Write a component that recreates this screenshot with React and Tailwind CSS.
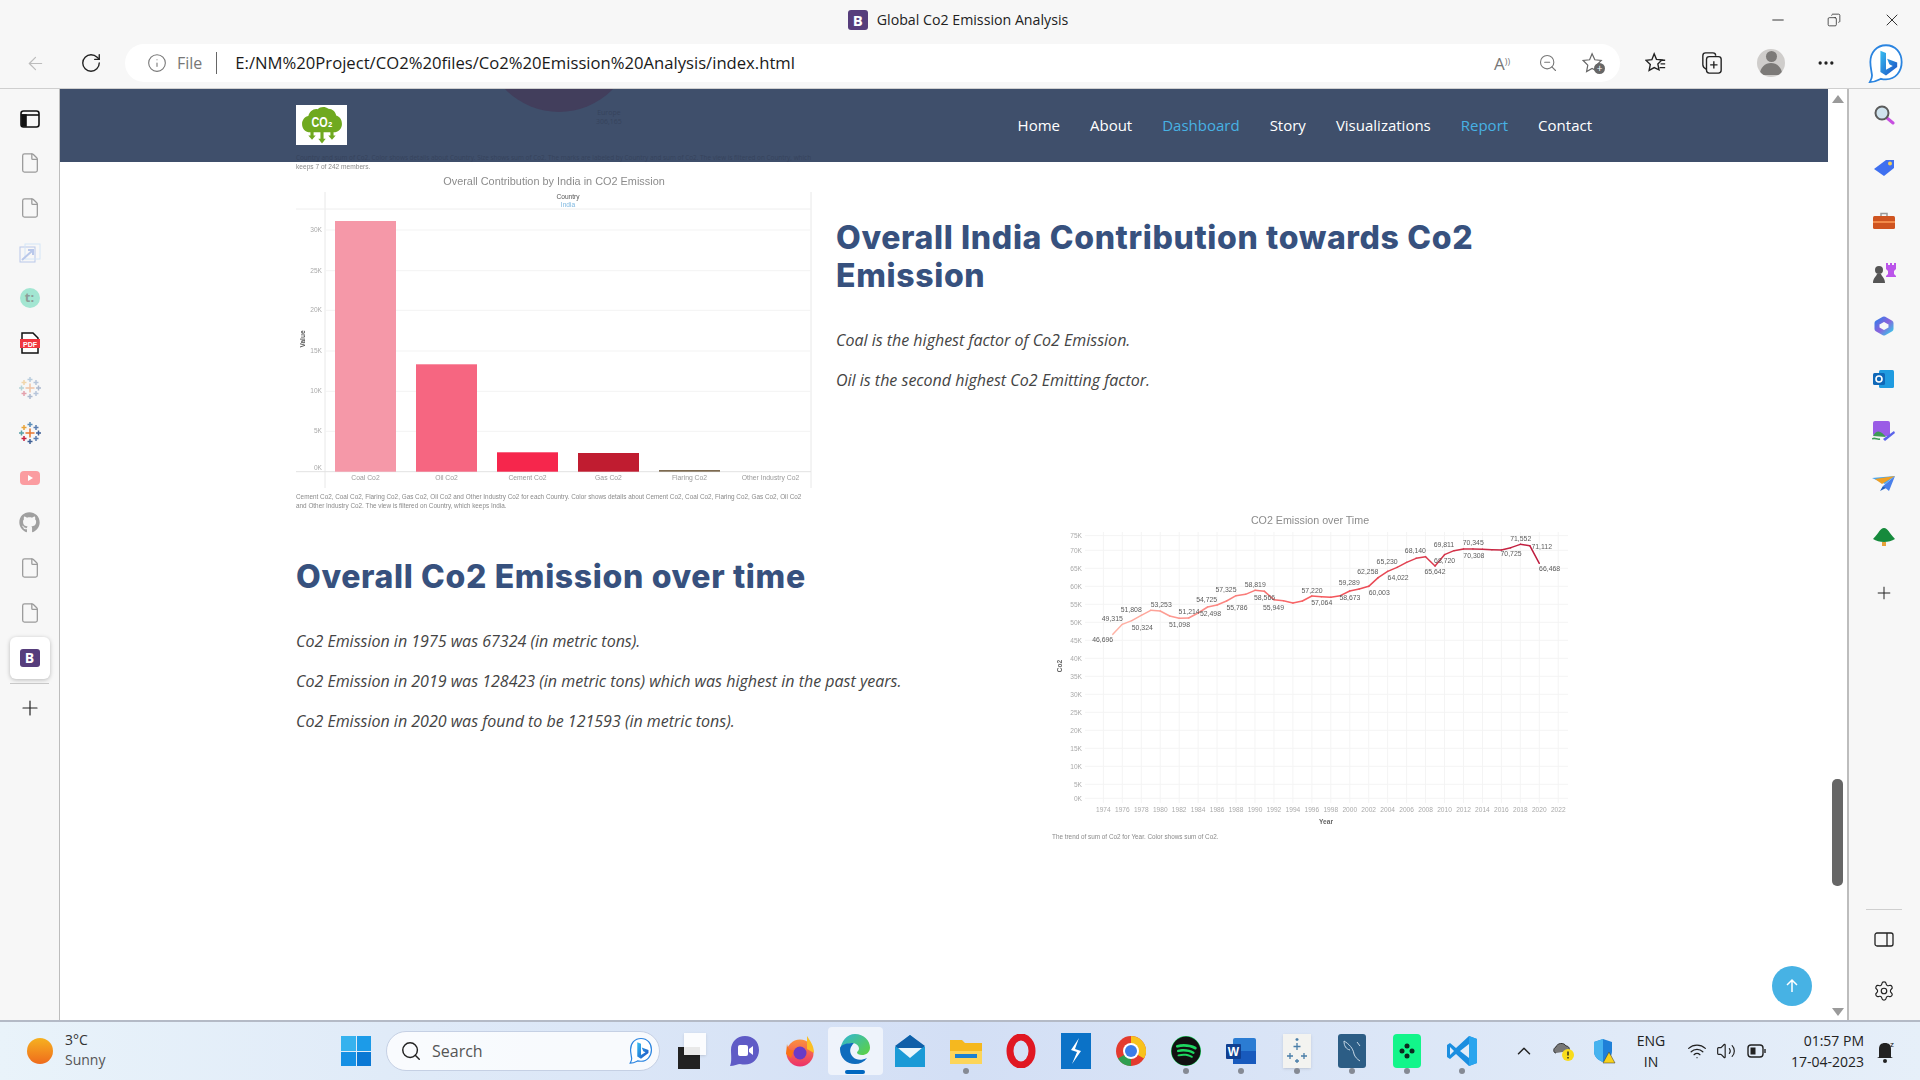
import React from "react";
import { ArrowLeft, RotateCw, Info, ZoomOut, Plus, Minus, X, Settings, File, Search, ChevronUp, Wifi, Volume2, Copy, MoreHorizontal } from "lucide-react";
import { FaGithub, FaSpotify } from "react-icons/fa";

const navLinks = [
  { label: "Home" },
  { label: "About" },
  { label: "Dashboard", active: true },
  { label: "Story" },
  { label: "Visualizations" },
  { label: "Report", active: true },
  { label: "Contact" },
];

const years = [
  388, 358, 347, 331, 316, 318, 333, 340, 339, 324, 306, 300, 288, 272, 268, 256, 259, 284, 287, 294, 288, 273, 275,
  277, 272, 258, 252, 244, 218, 199, 187, 172, 160, 155, 183, 149, 137, 132, 132, 133, 134, 135, 128, 118, 122, 175,
];

const pointLabels = [
  ["46,696", 182, 405], ["49,315", 210, 342], ["51,808", 265, 314], ["50,324", 297, 367], ["53,253", 352, 299],
  ["51,098", 405, 358], ["51,214", 433, 320], ["52,498", 495, 325], ["54,725", 484, 283], ["57,325", 540, 255],
  ["55,786", 572, 307], ["58,819", 625, 239], ["58,566", 652, 278], ["55,949", 678, 307], ["57,220", 790, 257],
  ["57,064", 818, 293], ["59,289", 898, 234], ["58,673", 900, 277], ["62,258", 952, 201], ["60,003", 985, 262],
  ["65,230", 1008, 170], ["64,022", 1040, 218], ["68,140", 1090, 138], ["65,642", 1147, 200], ["69,811", 1173, 119],
  ["68,720", 1175, 168], ["70,345", 1258, 114], ["70,308", 1260, 151], ["70,725", 1368, 146], ["71,552", 1396, 101],
  ["71,112", 1457, 124], ["66,468", 1480, 191],
];

const yTicks = [
  ["75K", 92], ["70K", 136], ["65K", 190], ["60K", 244], ["55K", 298], ["50K", 352], ["45K", 406], ["40K", 460],
  ["35K", 514], ["30K", 568], ["25K", 622], ["20K", 676], ["15K", 730], ["10K", 784], ["5K", 838], ["0K", 880],
];

const mix = (a, b, t) => a.map((v, i) => Math.round(v + (b[i] - v) * t));

function lineColor(t) {
  const c = t < 0.5 ? mix([255, 178, 165], [246, 88, 92], t * 2) : mix([246, 88, 92], [190, 28, 62], (t - 0.5) * 2);
  return `rgb(${c.join(",")})`;
}

function BarChart() {
  const bars = [
    ["Coal Co2", 335, 221, "#f598a8"],
    ["Oil Co2", 416, 364.3, "#f66681"],
    ["Cement Co2", 497, 452.3, "#f6264c"],
    ["Gas Co2", 578, 453, "#c01c30"],
    ["Flaring Co2", 659, 470, "#7d6a50"],
    ["Other Industry Co2", 740, 471.7, "#e8e8e8"],
  ];
  const ticks = [["30K", 230], ["25K", 270.7], ["20K", 310.3], ["15K", 351], ["10K", 391.3], ["5K", 431.3], ["0K", 471.7]];
  return (
    <svg viewBox="296 162 520 360" className="w-[520px] h-[360px] blur-[0.4px]" fontFamily="'Liberation Sans', sans-serif">
      <text x="296" y="169" fontSize="6.6" fill="#8a8a8a">keeps 7 of 242 members.</text>
      <text x="554" y="184.5" fontSize="10.9" fill="#8c8c8c" textAnchor="middle">Overall Contribution by India in CO2 Emission</text>
      <text x="568" y="198.5" fontSize="6.6" fill="#555" textAnchor="middle">Country</text>
      <text x="568" y="207" fontSize="6.6" fill="#7db7e0" textAnchor="middle">India</text>
      <line x1="325" y1="192" x2="325" y2="488" stroke="#e8e8e8" />
      <line x1="811" y1="192" x2="811" y2="488" stroke="#e8e8e8" />
      <line x1="296" y1="209" x2="811" y2="209" stroke="#eeeeee" />
      {ticks.map(([t, y]) => (
        <g key={t}>
          <line x1={t === "0K" ? 296 : 325} y1={y} x2="811" y2={y} stroke={t === "0K" ? "#e2e2e2" : "#f3f3f3"} />
          <text x="322" y={t === "0K" ? 470 : y + 2} fontSize="6.6" fill="#aaa" textAnchor="end">{t}</text>
        </g>
      ))}
      <text transform="translate(305 339) rotate(-90)" fontSize="6.6" fontWeight="700" fill="#555" textAnchor="middle">Value</text>
      {bars.map(([name, x, y, color]) => (
        <g key={name}>
          <rect x={x} y={y} width="61" height={471.7 - y} fill={color} />
          <text x={x + 30.5} y="480" fontSize="6.8" fill="#9a9a9a" textAnchor="middle">{name}</text>
        </g>
      ))}
      <text x="296" y="499" fontSize="6.36" fill="#8a8a8a">Cement Co2, Coal Co2, Flaring Co2, Gas Co2, Oil Co2 and Other Industry Co2 for each Country.  Color shows details about Cement Co2, Coal Co2, Flaring Co2, Gas Co2, Oil Co2</text>
      <text x="296" y="507.5" fontSize="6.36" fill="#8a8a8a">and Other Industry Co2. The view is filtered on Country, which keeps India.</text>
    </svg>
  );
}

function LineChart() {
  const px = (x) => 1040 + x / 2.904;
  const py = (y) => 505 + y / 3;
  const yearX = (i) => px(184 + 27.52 * i);
  const tickYears = [];
  for (let y = 1974; y <= 2022; y += 2) tickYears.push(y);
  return (
    <svg viewBox="1040 512 540 350" className="w-[540px] h-[350px] blur-[0.4px]" fontFamily="'Liberation Sans', sans-serif">
      <text x="1310" y="524" fontSize="10.7" fill="#8c8c8c" textAnchor="middle">CO2 Emission over Time</text>
      {yTicks.map(([t, y]) => (
        <g key={t}>
          <line x1="1085" y1={py(y)} x2="1568" y2={py(y)} stroke="#f4f4f4" />
          <text x="1082" y={py(y) + 2.2} fontSize="6.6" fill="#aaa" textAnchor="end">{t}</text>
        </g>
      ))}
      {tickYears.map((y, i) => (
        <g key={y}>
          <line x1={yearX(i * 2)} y1="532" x2={yearX(i * 2)} y2="803" stroke="#f4f4f4" />
          <text x={yearX(i * 2)} y="812" fontSize="6.6" fill="#aaa" textAnchor="middle">{y}</text>
        </g>
      ))}
      {years.slice(1).map((y, i) => (
        <line
          key={i}
          x1={yearX(i + 1)}
          y1={py(years[i])}
          x2={yearX(i + 2)}
          y2={py(y)}
          stroke={lineColor(i / 44)}
          strokeWidth="1.5"
          strokeLinecap="round"
        />
      ))}
      {pointLabels.map(([t, x, y]) => (
        <text key={t} x={px(x)} y={py(y) + 2.4} fontSize="6.9" fill="#5c5c5c" textAnchor="middle">{t}</text>
      ))}
      <text transform="translate(1062 666) rotate(-90)" fontSize="6.6" fontWeight="700" fill="#666" textAnchor="middle">Co2</text>
      <text x="1326" y="824" fontSize="6.6" fontWeight="700" fill="#666" textAnchor="middle">Year</text>
      <text x="1052" y="839" fontSize="6.36" fill="#8a8a8a">The trend of sum of Co2 for Year.  Color shows sum of Co2.</text>
    </svg>
  );
}

function Logo() {
  return (
    <div className="w-[51px] h-[40px] bg-white flex items-center justify-center">
      <svg viewBox="0 0 40 36" className="w-[42px] h-[38px]">
        <path d="M9 25c-5 0-8-3.5-8-8 0-4 3-7 6-7.5C8 5 12 2 16 3c2-2.5 7-3 10-.5 4 0 7 3 7.5 6.5 3.5 1 5.5 4 5.5 8 0 4.5-3.5 8-8 8z" fill="#6fa91f" />
        <rect x="9" y="24" width="3" height="5" fill="#6fa91f" />
        <path d="M7 28h7l-3.5 4z" fill="#6fa91f" />
        <rect x="18.5" y="24" width="3" height="8" fill="#6fa91f" />
        <path d="M16.5 31h7L20 35.5z" fill="#6fa91f" />
        <rect x="28" y="24" width="3" height="5" fill="#6fa91f" />
        <path d="M26 28h7l-3.5 4z" fill="#6fa91f" />
        <text x="20" y="20" textAnchor="middle" fontSize="14" fontWeight="700" fill="#fff" textLength="20" lengthAdjust="spacingAndGlyphs" fontFamily="'Liberation Sans', sans-serif">CO₂</text>
      </svg>
    </div>
  );
}

function BingLogo({ size = 36 }) {
  return (
    <svg width={size} height={size * 1.15} viewBox="0 0 32 37" fill="none">
      <defs>
        <linearGradient id="bingB" x1="0" y1="0" x2="1" y2="1">
          <stop offset="0" stopColor="#37bdf0" />
          <stop offset="1" stopColor="#1b4fc4" />
        </linearGradient>
      </defs>
      <path d="M16 2C7.5 2 2 8.5 2 17c0 4 1 8 1.5 12 .2 2-1 4-2 6 5 0 8-2 10-3 1.5.4 3 .5 4.5.5 8.5 0 14-7 14-15.5S24.5 2 16 2z" stroke="#2a84e0" strokeWidth="1.6" fill="#fff" />
      <path d="M11 7l5 2v15l6-3.5-3-1.5-2-5 9 3.5v4L16 29l-5-3z" fill="url(#bingB)" />
    </svg>
  );
}

function PanelIcon() {
  return (
    <svg width="20" height="18" viewBox="0 0 20 18" fill="none" stroke="#111" strokeWidth="1.6">
      <rect x="1" y="1" width="18" height="16" rx="2.5" />
      <path d="M1 5h18" />
      <path d="M2 5h4v11H3.5A1.5 1.5 0 0 1 2 14.5z" fill="#111" />
    </svg>
  );
}

function TableauMark({ faded }) {
  const marks = [
    [12, 12, 4.5, "#e8762d"], [12, 3.5, 2.5, "#5b8db8"], [12, 20.5, 2.5, "#3f5f95"], [3.5, 12, 2.5, "#59a0a8"],
    [20.5, 12, 2.5, "#3f5f95"], [6, 6.5, 2.5, "#e9a53a"], [18, 6.5, 2.5, "#5a7db0"], [6, 17.5, 2.5, "#c8233f"], [18, 17.5, 2.5, "#5a7db0"],
  ];
  return (
    <svg width="24" height="24" viewBox="0 0 24 24" className={faded ? "opacity-40" : ""}>
      {marks.map(([x, y, r, c], i) => (
        <path key={i} d={`M${x - r} ${y}h${r * 2}M${x} ${y - r}v${r * 2}`} stroke={c} strokeWidth="1.5" />
      ))}
    </svg>
  );
}

function LeftRail() {
  const gray = "#9b9b9b";
  const items = [
    <File size={22} color={gray} strokeWidth={1.4} />,
    <File size={22} color={gray} strokeWidth={1.4} />,
    <svg width="22" height="20" viewBox="0 0 22 20" fill="none" stroke="#b9c8ea" strokeWidth="1"><rect x="1" y="4" width="15" height="15" /><rect x="6" y="1" width="15" height="15" stroke="#d4e6f8" /><path d="M3 17l10-9M9 7h5v5" strokeWidth="2" /></svg>,
    <div className="w-[20px] h-[20px] rounded-full bg-[#a3e6d2] text-[#8e9c98] text-[13px] font-bold flex items-center justify-center">t:</div>,
    <svg width="20" height="22" viewBox="0 0 20 22"><path d="M2 1h11l5 5v15H2z" fill="#fff" stroke="#111" strokeWidth="1.5" /><rect x="0" y="7" width="20" height="9" fill="#f0363f" /><text x="10" y="14.5" textAnchor="middle" fontSize="7" fontWeight="700" fill="#fff" fontFamily="'Liberation Sans', sans-serif">PDF</text></svg>,
    <TableauMark faded />,
    <TableauMark />,
    <svg width="20" height="14" viewBox="0 0 20 14"><rect width="20" height="14" rx="4" fill="#fb9ca0" /><path d="M8 4l5 3-5 3z" fill="#fff" /></svg>,
    <FaGithub size={21} color="#a0a0a0" />,
    <File size={22} color={gray} strokeWidth={1.4} />,
    <File size={22} color={gray} strokeWidth={1.4} />,
  ];
  return (
    <aside className="w-[60px] shrink-0 border-r border-[#bdbdbd] flex flex-col items-center pt-[8px]">
      <div className="h-[43px] w-full flex items-center justify-center shrink-0"><PanelIcon /></div>
      {items.map((icon, i) => (
        <div key={i} className="h-[45px] w-full flex items-center justify-center shrink-0">{icon}</div>
      ))}
      <div className="w-[40px] h-[42px] mt-[2px] bg-white rounded-[6px] shadow-[0_1px_4px_rgba(0,0,0,0.25)] flex items-center justify-center shrink-0">
        <div className="w-[20px] h-[18px] bg-[#563d7c] rounded-[3px] text-white text-[14px] leading-[18px] font-bold text-center">B</div>
      </div>
      <div className="w-[39px] border-t border-[#c8c8c8] mt-[4px]" />
      <div className="mt-[12px]"><Plus size={24} color="#222" strokeWidth={1.2} /></div>
    </aside>
  );
}

function RightRail() {
  const items = [
    <svg width="22" height="22" viewBox="0 0 22 22" fill="none"><path d="M14 14l6 5" stroke="#c74fe0" strokeWidth="3" strokeLinecap="round" /><circle cx="9" cy="9" r="6.5" fill="#cfe3ee" stroke="#5b5b5b" strokeWidth="2" /></svg>,
    <svg width="22" height="18" viewBox="0 0 22 18"><path d="M1 10L13 1h8v8L11 17z" fill="#3f70f0" /><circle cx="17" cy="4.5" r="2" fill="#f4cf55" /></svg>,
    <svg width="22" height="18" viewBox="0 0 22 18"><path d="M8 4V1.5h6V4" fill="none" stroke="#999" strokeWidth="1.5" /><rect y="4" width="22" height="13" rx="1.5" fill="#cf5420" /><rect y="9" width="22" height="2" fill="#f28a4a" /></svg>,
    <svg width="24" height="22" viewBox="0 0 24 22"><path d="M14 1h2v2h2V1h2v2h2V1h2v6l-2 2v3l2 2v1H14v-1l2-2V9l-2-2z" fill="#bb55ea" /><circle cx="7" cy="8" r="4" fill="#555" /><path d="M1 21c0-5 3-6 4-9h4c1 3 4 4 4 9z" fill="#555" /></svg>,
    <svg width="22" height="20" viewBox="0 0 22 20" fill="none"><path d="M11 3l7 4v6l-7 4-7-4V7z" stroke="url(#m365)" strokeWidth="5" strokeLinejoin="round" /><defs><linearGradient id="m365" x1="0" y1="0" x2="1" y2="1"><stop stopColor="#3c7be8" /><stop offset="0.5" stopColor="#8a62dc" /><stop offset="1" stopColor="#3fbfe8" /></linearGradient></defs></svg>,
    <svg width="22" height="20" viewBox="0 0 22 20"><rect x="6" y="1" width="15" height="18" rx="1.5" fill="#1f9be0" /><rect y="4" width="12" height="12" rx="1.5" fill="#0f68b8" /><circle cx="6" cy="10" r="3" fill="none" stroke="#fff" strokeWidth="1.6" /></svg>,
    <svg width="24" height="22" viewBox="0 0 24 22"><rect x="1" y="1" width="17" height="15" rx="2" fill="#9a5ce6" /><path d="M1 16c4-7 8-5 13 1z" fill="#3e9b55" /><path d="M11 19l11-8 1 2-10 8z" fill="#5a63ea" /><path d="M0 19c3-2 5 1 8 0" stroke="#3e9b55" strokeWidth="1.5" fill="none" /></svg>,
    <svg width="24" height="16" viewBox="0 0 24 16"><path d="M0 2l23-2-10 8z" fill="#46a5f0" /><path d="M3 3l20-3-13 8z" fill="#f0a024" /><path d="M23 0L17 15l-6-5z" fill="#4a80ea" /><path d="M11 10l-3 5 2-1 4-2z" fill="#1f5fc0" /></svg>,
    <svg width="22" height="20" viewBox="0 0 22 20"><path d="M11 1c4 0 5 5 11 11-3 2-7 3-11 3S3 14 0 12C6 6 7 1 11 1z" fill="#168a3c" /><rect x="9" y="15" width="4" height="4" fill="#e8a33a" /></svg>,
  ];
  return (
    <aside className="w-[70px] shrink-0 flex flex-col items-center">
      {items.map((icon, i) => (
        <div key={i} className="h-[52.7px] w-full flex items-center justify-center shrink-0">{icon}</div>
      ))}
      <div className="h-[60px] flex items-center justify-center shrink-0"><Plus size={20} color="#222" strokeWidth={1.2} /></div>
      <div className="mt-auto w-[36px] border-t border-[#cfcfcf] mb-[22px]" />
      <svg width="20" height="16" viewBox="0 0 20 16" fill="none" stroke="#222" strokeWidth="1.3" className="mb-[32px]"><rect x="1" y="1" width="18" height="13" rx="2" /><path d="M13 1v13" /></svg>
      <div className="mb-[18px]"><Settings size={22} color="#222" strokeWidth={1.3} /></div>
    </aside>
  );
}

function TabBar() {
  return (
    <div className="h-[44px] flex items-center relative shrink-0">
      <div className="w-full flex items-center justify-center gap-[9px] pb-[4px] pr-[4px]">
        <div className="w-[20px] h-[20px] bg-[#563d7c] rounded-[3px] text-white text-[15px] leading-[20px] font-bold text-center">B</div>
        <span className="text-[14.2px] text-[#222]">Global Co2 Emission Analysis</span>
      </div>
      <div className="absolute right-[18px] top-[10px] flex items-center">
        <Minus size={18} color="#222" strokeWidth={1.2} />
        <Copy size={14} color="#222" strokeWidth={1.3} className="scale-x-[-1] ml-[40px]" />
        <X size={20} color="#222" strokeWidth={1.1} className="ml-[41px]" />
      </div>
    </div>
  );
}

function ToolBar() {
  return (
    <div className="h-[44px] flex items-center shrink-0 relative">
      <div className="w-[125px] flex items-center pl-[25px] gap-[34px] mt-[-6px]">
        <ArrowLeft size={21} color="#bcbcbc" strokeWidth={1.4} />
        <RotateCw size={22} color="#222" strokeWidth={1.5} />
      </div>
      <div className="w-[1495px] h-[38px] mt-[-6px] bg-white rounded-[19px] flex items-center pl-[22px] pr-[16px] text-[17px]">
        <Info size={20} color="#777" strokeWidth={1.3} />
        <span className="ml-[10px] text-[#777] text-[16px]">File</span>
        <span className="ml-[14px] w-[1px] h-[22px] bg-[#666]" />
        <span className="ml-[18px] text-[#1a1a1a] text-[16.65px]">E:/NM%20Project/CO2%20files/Co2%20Emission%20Analysis/index.html</span>
        <div className="ml-auto flex items-center gap-[24px]">
          <span className="text-[#777] text-[17px] leading-none w-[20px]">A<sup className="text-[9px]">))</sup></span>
          <ZoomOut size={20} color="#777" strokeWidth={1.3} />
          <div className="relative w-[22px] h-[22px]">
            <svg width="22" height="22" viewBox="0 0 24 24" fill="none" stroke="#666" strokeWidth="1.3"><path d="M11 2l3 6.5 7 .8-5 5 1.3 7L11 18l-6 3.3 1.3-7-5-5 7-.8z" /></svg>
            <div className="absolute right-[-1px] bottom-[0px] w-[11px] h-[11px] rounded-full bg-[#666] text-white text-[10px] leading-[10px] text-center">+</div>
          </div>
        </div>
      </div>
      <div className="flex items-center mt-[-6px] pl-[25px]">
        <svg width="22" height="22" viewBox="0 0 24 24" fill="none" stroke="#222" strokeWidth="1.5"><path d="M10 2l2.5 6 6 .6-4.5 4.4 1.3 6.5L10 17l-5.5 3 1.3-6.500L1 9l6.500-.6zM16 9h6M17 13h5M16 17h6" /></svg>
        <svg width="22" height="24" viewBox="0 0 24 26" fill="none" stroke="#222" strokeWidth="1.5" className="ml-[34px]"><rect x="6" y="6" width="16" height="18" rx="3" /><path d="M6 20c-2-1-4-2-4-5V5c0-2 1-3 3-3h8c2 0 3 1 3 3M14 11v8M10 15h8" /></svg>
        <div className="ml-[34px] w-[28px] h-[28px] rounded-full bg-[#cfcdcb] flex flex-col items-center justify-center overflow-hidden">
          <div className="w-[11px] h-[11px] rounded-full bg-[#7c7a78]" />
          <div className="w-[22px] h-[12px] rounded-t-full bg-[#7c7a78] mt-[1px]" />
        </div>
        <MoreHorizontal size={20} color="#222" strokeWidth={2} className="ml-[31px]" />
        <div className="ml-[32px] mt-[2px]"><BingLogo /></div>
      </div>
    </div>
  );
}

function Navbar() {
  return (
    <header className="h-[73px] bg-[#3f4f6b] relative overflow-hidden shrink-0 flex items-center pl-[236px] pr-[236px]">
      <div className="absolute left-[424px] top-[-127px] w-[150px] h-[150px] rounded-full bg-[#423e5c]" />
      <div className="absolute left-[536px] top-[19px] text-[7px] leading-[9px] text-[#36435c] text-center">Europe<br />306,165</div>
      <div className="absolute left-[236px] top-[64px] text-[6.4px] whitespace-nowrap text-[#36435c]">Country and sum of Co2.  Color shows details about Country.  Size shows sum of Co2.  The marks are labeled by Country and sum of Co2. The view is filtered on Country, which</div>
      <div className="relative mt-[-1px]"><Logo /></div>
      <nav className="relative ml-auto flex items-center gap-[30px] text-[15px] text-white">
        {navLinks.map((link) => (
          <a key={link.label} className={link.active ? "text-[#47b2e4]" : "text-white"}>{link.label}</a>
        ))}
      </nav>
    </header>
  );
}

function Heading({ children }) {
  return <h2 className="text-[32px] leading-[38.4px] font-extrabold text-[#37517e] font-['Inter',sans-serif] tracking-[0.65px]">{children}</h2>;
}

function Note({ children }) {
  return <p className="text-[16px] leading-[24px] italic text-[#444444] mb-[16px]">{children}</p>;
}

function Scrollbar() {
  return (
    <div className="w-[21px] shrink-0 border-r-2 border-[#bdbdbd] bg-white flex flex-col items-center pt-[6px] pb-[4px]">
      <div className="w-0 h-0 border-x-[6px] border-x-transparent border-b-[8px] border-b-[#9a9a9a]" />
      <div className="w-[11px] h-[107px] rounded-[5px] bg-[#666666] mt-[676px]" />
      <div className="w-0 h-0 border-x-[6px] border-x-transparent border-t-[8px] border-t-[#9a9a9a] mt-auto" />
    </div>
  );
}

function TaskIcon({ children, running, active }) {
  return (
    <div className={"w-[55.2px] h-[48px] relative flex items-center justify-center shrink-0 rounded-[4px] " + (active ? "bg-white/60" : "")}>
      {children}
      {running && <span className="absolute bottom-[1px] left-1/2 -ml-[3px] w-[6px] h-[6px] rounded-full bg-[#858a94]" />}
      {active && <span className="absolute bottom-[1px] left-1/2 -ml-[10px] w-[20px] h-[4px] rounded-full bg-[#0067c0]" />}
    </div>
  );
}

function Taskbar() {
  return (
    <footer className="h-[60px] shrink-0 border-t-2 border-[#b4bac6] bg-gradient-to-r from-[#e9f3fa] via-[#d3dff5] to-[#e6eff9] flex items-center">
      <div className="w-[334px] flex items-center pl-[27px] shrink-0">
        <div className="w-[26px] h-[26px] rounded-full bg-gradient-to-b from-[#f5b120] to-[#ee6a1c]" />
        <div className="ml-[12px] text-[14px] leading-[20px] text-[#333] mt-[-2px]">
          <div>3°C</div>
          <div className="text-[#555]">Sunny</div>
        </div>
      </div>
      <div className="w-[44px] flex justify-center shrink-0">
        <div className="w-[30px] h-[30px] grid grid-cols-2 gap-[1px]">
          <div className="bg-[#36b2ee]" /><div className="bg-[#1c9be8]" /><div className="bg-[#1590e4]" /><div className="bg-[#0a78d4]" />
        </div>
      </div>
      <div className="ml-[8px] w-[274px] h-[40px] rounded-[20px] bg-white/80 border border-[#c5d0e4] flex items-center pl-[13px] pr-[6px] shrink-0">
        <Search size={22} color="#222" strokeWidth={1.6} />
        <span className="ml-[10px] text-[16px] text-[#555]">Search</span>
        <div className="ml-auto"><BingLogo size={24} /></div>
      </div>
      <div className="flex items-center h-[48px] shrink-0 ml-[2px]">
        <TaskIcon>
          <div className="w-[24px] h-[36px] relative">
            <div className="absolute left-0 bottom-0 w-[22px] h-[22px] bg-[#222]" />
            <div className="absolute right-[-4px] top-0 w-[22px] h-[22px] bg-white/90 shadow-sm" />
          </div>
        </TaskIcon>
        <TaskIcon>
          <svg width="30" height="32" viewBox="0 0 30 32"><path d="M15 1C7 1 1 7 1 15c0 5 1 12-1 16 4 0 8-2 10-2 2 .5 3 .5 5 .5 8 0 14-6 14-14.5S23 1 15 1z" fill="#5f5bc6" /><rect x="8" y="10" width="10" height="11" rx="2" fill="#fff" /><path d="M19 14l4-3v9l-4-3z" fill="#fff" /></svg>
        </TaskIcon>
        <TaskIcon>
          <svg width="30" height="32" viewBox="0 0 30 32"><circle cx="15" cy="18" r="13.5" fill="url(#ffx)" /><circle cx="15" cy="18" r="6.5" fill="#6a3bc7" /><path d="M22 1c3 5 7 9 7 17l-7-4z" fill="#fbbf24" /><path d="M2 9c1 6 4 7 7 6l-3 8-5-4z" fill="#f97316" /><defs><linearGradient id="ffx" x1="0" y1="0" x2="0" y2="1"><stop stopColor="#fb923c" /><stop offset="1" stopColor="#ec2f6b" /></linearGradient></defs></svg>
        </TaskIcon>
        <TaskIcon active>
          <svg width="32" height="32" viewBox="0 0 32 32" className="mb-[4px]"><defs><linearGradient id="edge" x1="0" y1="0" x2="1" y2="0.8"><stop stopColor="#2fb4dc" /><stop offset="1" stopColor="#5ad04a" /></linearGradient></defs><path d="M16 1c9 0 15 6.500 15 13.500 0 5-4 7.500-8 7.500-3 0-5-1-5-2.500 0-1 2-1.500 2-4 0-3-3-5.500-7-5.500-6 0-11 4-12 8C2 8 8 1 16 1z" fill="url(#edge)" /><path d="M1 16c0 9 7 15 15 15 5 0 9-2 12-6-6 3-11 2-14-1-3-3-3.500-7-2-10 .8-1.500 2-3 3-4-6 0-14 1-14 6z" fill="#0f6cbd" /></svg>
        </TaskIcon>
        <TaskIcon>
          <svg width="30" height="34" viewBox="0 0 30 34"><path d="M15 1L0 13v20h30V13z" fill="#1a9ad6" /><path d="M0 12L15 1l15 11-15 10z" fill="#0f5fa8" /><path d="M3 14h24L15 24z" fill="#eaf6fc" /></svg>
        </TaskIcon>
        <TaskIcon running>
          <svg width="34" height="28" viewBox="0 0 34 28"><path d="M1 3h12l3 3h17v21H1z" fill="#f5b81f" /><rect x="1" y="14" width="32" height="13" fill="#fcd55a" /><rect x="6" y="17" width="22" height="4" fill="#1a80d0" /></svg>
        </TaskIcon>
        <TaskIcon>
          <svg width="30" height="34" viewBox="0 0 30 34" fill="none"><ellipse cx="15" cy="17" rx="11" ry="14" stroke="#e01722" strokeWidth="7" /></svg>
        </TaskIcon>
        <TaskIcon>
          <svg width="30" height="36" viewBox="0 0 30 36"><rect width="30" height="36" fill="#0b72c7" /><path d="M18 5l-8 12 6 2-5 12 9-13-6-2z" fill="#fff" /></svg>
        </TaskIcon>
        <TaskIcon>
          <svg width="30" height="30" viewBox="0 0 30 30"><circle cx="15" cy="15" r="15" fill="#e33b2e" /><path d="M15 15L2 22.5A15 15 0 0 0 15 30z" fill="#2f9e4f" /><path d="M15 0a15 15 0 0 1 13 22.5L15 15z" fill="#f8c21c" /><circle cx="15" cy="15" r="8" fill="#fff" /><circle cx="15" cy="15" r="6" fill="#3b7de8" /></svg>
        </TaskIcon>
        <TaskIcon running><FaSpotify size={30} color="#111" className="bg-[#1ed760] rounded-full" /></TaskIcon>
        <TaskIcon running>
          <svg width="30" height="30" viewBox="0 0 30 30"><rect x="7" y="2" width="23" height="26" rx="2" fill="#2b7cd3" /><rect x="7" y="15" width="23" height="13" fill="#185abd" /><rect x="0" y="8" width="15" height="15" rx="1" fill="#103f91" /><text x="7.5" y="20" textAnchor="middle" fontSize="12" fontWeight="700" fill="#fff" fontFamily="'Liberation Sans', sans-serif">W</text></svg>
        </TaskIcon>
        <TaskIcon running>
          <div className="w-[28px] h-[34px] bg-[#f3f3f0] flex items-center justify-center shadow-sm">
            <svg width="24" height="28" viewBox="0 0 24 28" stroke="#4a7ea8" strokeWidth="1.3"><path d="M12 6v7M8.5 9.5h7M5 16v6M2 19h6M19 16v6M16 19h6M12 1v3M10.5 2.5h3M12 22v4M10 24h4" /></svg>
          </div>
        </TaskIcon>
        <TaskIcon running>
          <div className="w-[28px] h-[34px] rounded-[3px] bg-[#2c5d85] flex items-center justify-center">
            <svg width="22" height="24" viewBox="0 0 22 24" fill="none" stroke="#c7d8e6" strokeWidth="1"><path d="M3 2c5 3 9 7 10 13 1 3 3 5 6 7M3 2c0 5 2 8 6 9M16 3l3 4" /></svg>
          </div>
        </TaskIcon>
        <TaskIcon running>
          <div className="w-[28px] h-[34px] rounded-[4px] bg-[#12f58a] flex items-center justify-center">
            <svg width="16" height="16" viewBox="0 0 16 16" fill="#0c2a20"><circle cx="8" cy="3" r="2.5" /><circle cx="3" cy="8" r="2.5" /><circle cx="13" cy="8" r="2.5" /><circle cx="8" cy="13" r="2.5" /></svg>
          </div>
        </TaskIcon>
        <TaskIcon running>
          <svg width="30" height="32" viewBox="0 0 30 32"><path d="M22 1L9 13 3 8 0 10v12l3 2 6-5 13 12 8-3V4z" fill="#1b8ee0" /><path d="M22 1l8 3v24l-8 3z" fill="#2aa5ee" /><path d="M22 9l-9 7 9 7z" fill="#e3edf9" /><path d="M3 12v8l4-4z" fill="#e3edf9" /></svg>
        </TaskIcon>
      </div>
      <div className="ml-auto flex items-center shrink-0 text-[#222]">
        <ChevronUp size={22} color="#222" strokeWidth={1.6} className="mr-[18px]" />
        <svg width="22" height="24" viewBox="0 0 22 24" className="mr-[17px]"><path d="M3 14c-3 0-3-5 0-6 1-4 8-5 10-1 3 0 4 3 3 5" fill="#777" stroke="#333" /><circle cx="15" cy="16" r="6" fill="#f8dc1c" /><path d="M15 12.5v4M15 18v1.5" stroke="#222" strokeWidth="1.4" /></svg>
        <svg width="24" height="26" viewBox="0 0 24 26" className="mr-[12px]"><path d="M11 1l9 3v9c0 6-4 9-9 11-5-2-9-5-9-11V4z" fill="#1f80d8" /><path d="M11 1v23c-5-2-9-5-9-11V4z" fill="#46b3ef" /><path d="M17 14l6 11H11z" fill="#f8d21c" stroke="#333" strokeWidth="0.5" /></svg>
        <div className="w-[46px] text-center text-[14px] leading-[21px] mr-[13px]">ENG<br />IN</div>
        <Wifi size={20} color="#222" strokeWidth={1.5} className="mr-[9px]" />
        <Volume2 size={20} color="#222" strokeWidth={1.4} className="mr-[11px]" />
        <svg width="20" height="16" viewBox="0 0 20 16" fill="none" stroke="#222" strokeWidth="1.4" className="mr-[33px]"><rect x="1" y="2" width="15" height="12" rx="3" /><rect x="3.5" y="4.5" width="5" height="7" fill="#222" stroke="none" /><path d="M18 6v4" /></svg>
        <div className="text-[14px] leading-[21px] text-right w-[64px] whitespace-nowrap flex flex-col items-end">
          <span>01:57 PM</span>
          <span>17-04-2023</span>
        </div>
        <svg width="20" height="24" viewBox="0 0 20 24" className="ml-[12px] mr-[24px]"><path d="M3 18V10c0-4 2-6 6-6s6 2 6 6v8l2 1H1z" fill="#222" /><circle cx="9" cy="22" r="2" fill="#222" /><text x="14" y="8" fontSize="8" fill="#222" fontFamily="'Liberation Sans', sans-serif">z</text></svg>
      </div>
    </footer>
  );
}

export default function App() {
  return (
    <div className="w-[1920px] h-[1080px] flex flex-col overflow-hidden bg-[#f7f7f7] font-['Open_Sans',sans-serif]">
      <TabBar />
      <ToolBar />
      <div className="flex h-[932px] border-t border-[#cfcfcf]">
        <LeftRail />
        <main className="w-[1768px] shrink-0 bg-white flex flex-col overflow-hidden">
          <Navbar />
          <section className="flex pl-[236px] h-[350px] shrink-0">
            <div className="w-[520px] shrink-0"><BarChart /></div>
            <div className="ml-[20px] pt-[57px] w-[680px]">
              <Heading>Overall India Contribution towards Co2 Emission</Heading>
              <div className="mt-[32px]">
                <Note>Coal is the highest factor of Co2 Emission.</Note>
                <Note>Oil is the second highest Co2 Emitting factor.</Note>
              </div>
            </div>
          </section>
          <section className="flex pl-[236px] flex-1 relative">
            <div className="w-[744px] shrink-0 pt-[46px]">
              <Heading>Overall Co2 Emission over time</Heading>
              <div className="mt-[33px]">
                <Note>Co2 Emission in 1975 was 67324 (in metric tons).</Note>
                <Note>Co2 Emission in 2019 was 128423 (in metric tons) which was highest in the past years.</Note>
                <Note>Co2 Emission in 2020 was found to be 121593 (in metric tons).</Note>
              </div>
            </div>
            <div className="w-[540px] shrink-0"><LineChart /></div>
            <button className="absolute right-[16px] bottom-[14px] w-[40px] h-[40px] rounded-full bg-[#47b2e4] flex items-center justify-center">
              <svg width="16" height="16" viewBox="0 0 16 16" fill="none" stroke="#fff" strokeWidth="1.5"><path d="M8 14V2M3 7l5-5 5 5" /></svg>
            </button>
          </section>
        </main>
        <Scrollbar />
        <RightRail />
      </div>
      <Taskbar />
    </div>
  );
}
